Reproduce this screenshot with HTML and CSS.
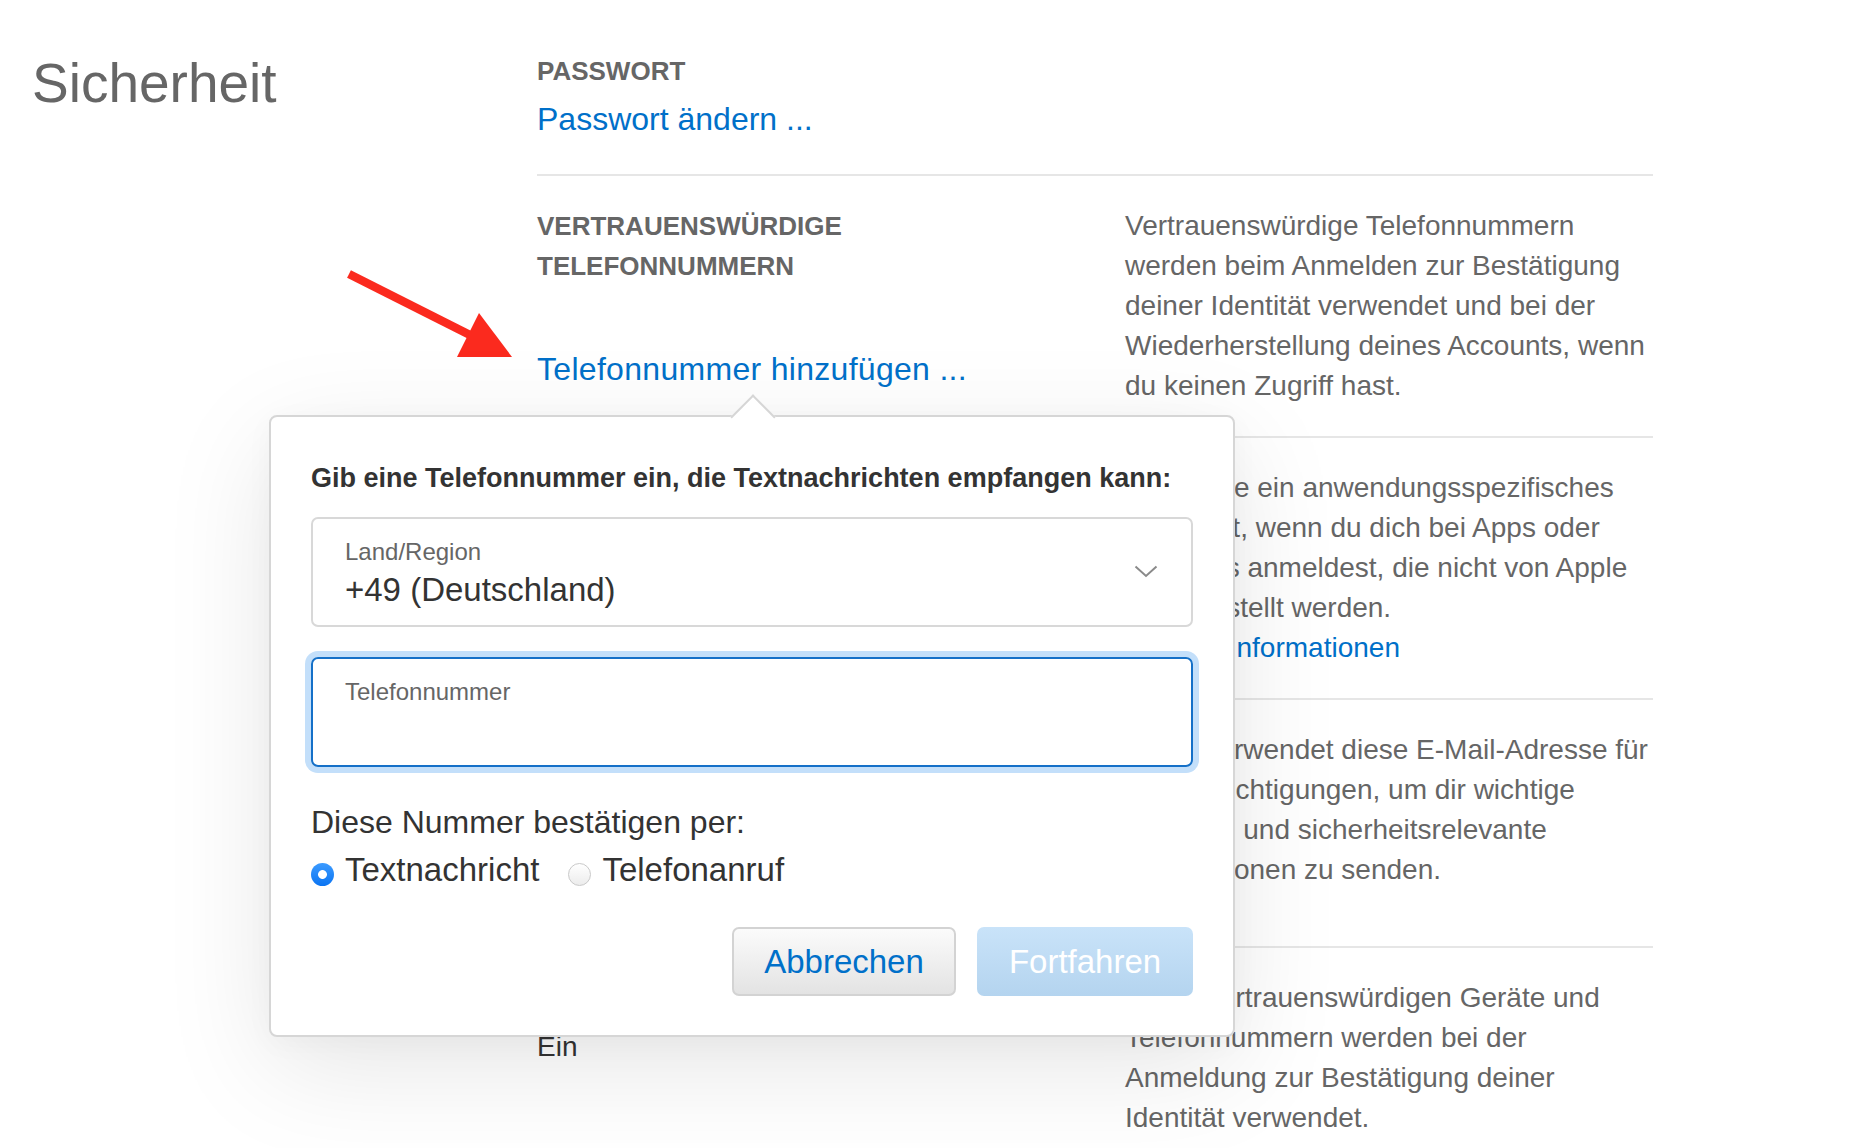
FILE: index.html
```html
<!DOCTYPE html>
<html lang="de">
<head>
<meta charset="utf-8">
<title>Sicherheit</title>
<link rel="stylesheet" href="styles.css">
</head>
<body>
<div class="page">
  <h1 class="title">Sicherheit</h1>
  <div class="sections">
    <section class="section first">
      <div class="col-left">
        <h2 class="label">PASSWORT</h2>
        <a class="link link-tight" href="#">Passwort ändern ...</a>
      </div>
    </section>

    <section class="section">
      <div class="col-left">
        <h2 class="label">VERTRAUENSWÜRDIGE<br>TELEFONNUMMERN</h2>
        <a class="link link-add" href="#">Telefonnummer hinzufügen ...</a>
      </div>
      <p class="desc">Vertrauenswürdige Telefonnummern<br>werden beim Anmelden zur Bestätigung<br>deiner Identität verwendet und bei der<br>Wiederherstellung deines Accounts, wenn<br>du keinen Zugriff hast.</p>
    </section>

    <section class="section">
      <div class="col-left"></div>
      <p class="desc">Generiere ein anwendungsspezifisches<br>Passwort, wenn du dich bei Apps oder<br>Websites anmeldest, die nicht von Apple<br>bereitgestellt werden.<br><a class="desc-link" href="#">Weitere Informationen</a></p>
    </section>

    <section class="section tall">
      <div class="col-left"></div>
      <p class="desc">Apple verwendet diese E-Mail-Adresse für<br>Benachrichtigungen, um dir wichtige<br>Account- und sicherheitsrelevante<br>Informationen zu senden.</p>
    </section>

    <section class="section">
      <div class="col-left">
        <h2 class="label">ZWEI-FAKTOR-AUTHENTIFIZIERUNG</h2>
        <div class="value">Ein</div>
      </div>
      <p class="desc">Deine vertrauenswürdigen Geräte und<br>Telefonnummern werden bei der<br>Anmeldung zur Bestätigung deiner<br>Identität verwendet.</p>
    </section>
  </div>
</div>

<svg class="annotation-arrow" width="180" height="100" viewBox="0 0 180 100">
  <line x1="9" y1="12" x2="132" y2="74" stroke="#fb2a1e" stroke-width="8.5"/>
  <polygon points="139,51 117,95 172,95" fill="#fb2a1e"/>
</svg>

<div class="popover">
  <p class="prompt">Gib eine Telefonnummer ein, die Textnachrichten empfangen kann:</p>
  <div class="field">
    <div class="field-body">
      <div class="field-label">Land/Region</div>
      <div class="field-value">+49 (Deutschland)</div>
    </div>
    <svg class="chevron" width="24" height="13" viewBox="0 0 24 13">
      <polyline points="1.5,1.5 12,11 22.5,1.5" fill="none" stroke="#8a8a8a" stroke-width="2"/>
    </svg>
  </div>
  <div class="field field-focus">
    <div class="field-body">
      <div class="field-label">Telefonnummer</div>
    </div>
  </div>
  <p class="confirm">Diese Nummer bestätigen per:</p>
  <div class="radios">
    <div class="radio-option"><span class="radio radio-on"></span><span>Textnachricht</span></div>
    <div class="radio-option"><span class="radio radio-off"></span><span>Telefonanruf</span></div>
  </div>
  <div class="actions">
    <button class="btn btn-cancel" type="button">Abbrechen</button>
    <button class="btn btn-continue" type="button">Fortfahren</button>
  </div>
</div>
</body>
</html>
```

FILE: styles.css
```css
* {
  box-sizing: border-box;
}

body {
  margin: 0;
  background: #fff;
  font-family: "Liberation Sans", Arial, sans-serif;
  overflow: hidden;
}

.page {
  display: grid;
  grid-template-columns: 505px 1116px;
  padding: 51px 0 0 32px;
}

.title {
  margin: 0;
  font-size: 55px;
  font-weight: normal;
  line-height: 64px;
  color: #666;
}

.section {
  display: grid;
  grid-template-columns: 528px 528px;
  column-gap: 60px;
  padding: 30px 0;
  border-top: 2px solid #e6e6e6;
}

.section.first {
  border-top: 0;
  padding: 0 0 33px;
}

.section.tall {
  padding-bottom: 56px;
}

.label {
  margin: 0;
  font-size: 26px;
  font-weight: bold;
  line-height: 40px;
  color: #666;
  white-space: nowrap;
}

.link {
  display: block;
  font-size: 32px;
  line-height: 44px;
  color: #0070c9;
  text-decoration: none;
  white-space: nowrap;
}

.link-tight {
  margin-top: 6px;
}

.link-add {
  margin-top: 61px;
  letter-spacing: 0.3px;
}

.desc {
  margin: 0;
  font-size: 28px;
  line-height: 40px;
  color: #666;
  white-space: nowrap;
}

.desc-link {
  color: #0070c9;
  text-decoration: none;
}

.value {
  margin-top: 9px;
  font-size: 28px;
  line-height: 40px;
  color: #333;
}

.annotation-arrow {
  position: absolute;
  left: 340px;
  top: 262px;
}

.popover {
  position: absolute;
  left: 269px;
  top: 415px;
  width: 966px;
  padding: 45px 40px 39px;
  background: #fff;
  border: 2px solid #d6d6d6;
  border-radius: 8px;
  box-shadow: 0 30px 110px rgba(0, 0, 0, 0.10), 0 6px 30px rgba(0, 0, 0, 0.03);
}

.popover::before {
  content: "";
  position: absolute;
  left: 466px;
  top: -16px;
  width: 30px;
  height: 30px;
  background: #fff;
  border-left: 2px solid #d6d6d6;
  border-top: 2px solid #d6d6d6;
  transform: rotate(45deg);
}

.prompt {
  position: relative;
  margin: 0;
  font-size: 27px;
  font-weight: bold;
  line-height: 32px;
  color: #333;
  white-space: nowrap;
}

.field {
  margin-top: 23px;
  height: 110px;
  border: 2px solid #d8d8d8;
  border-radius: 7px;
  padding: 19px 33px 0 32px;
  display: flex;
  justify-content: space-between;
  align-items: flex-start;
}

.field-focus {
  margin-top: 30px;
  border-color: #1470c8;
  box-shadow: 0 0 0 6px #c3dffa;
}

.field-label {
  font-size: 24px;
  line-height: 28px;
  color: #666;
}

.field-value {
  margin-top: 5px;
  font-size: 33px;
  line-height: 38px;
  color: #333;
}

.chevron {
  margin-top: 27px;
}

.confirm {
  margin: 36px 0 0;
  font-size: 32px;
  line-height: 38px;
  color: #333;
}

.radios {
  margin-top: 9px;
  display: flex;
  align-items: flex-start;
  font-size: 33px;
  line-height: 40px;
  color: #333;
}

.radio-option {
  display: flex;
  align-items: flex-start;
}

.radio-option + .radio-option {
  margin-left: 29px;
}

.radio {
  width: 23px;
  height: 23px;
  border-radius: 50%;
  margin-top: 13px;
  margin-right: 11px;
  flex: none;
}

.radio-on {
  background: radial-gradient(circle, #fff 0 4px, rgba(255, 255, 255, 0) 4.8px), linear-gradient(#3c9bff, #0b74f2);
}

.radio-off {
  border: 1px solid #c9c9c9;
  background: linear-gradient(#ffffff, #ececec);
}

.actions {
  margin-top: 37px;
  display: flex;
  justify-content: flex-end;
  gap: 21px;
}

.btn {
  height: 69px;
  padding: 0;
  border-radius: 7px;
  font-family: inherit;
  font-size: 33px;
  line-height: 38px;
  display: flex;
  align-items: center;
  justify-content: center;
}

.btn-cancel {
  width: 224px;
  border: 2px solid #d3d3d3;
  background: linear-gradient(#fbfbfb, #e3e3e3);
  color: #0070c9;
}

.btn-continue {
  width: 216px;
  border: 0;
  background: linear-gradient(#c9e3f9, #b4d4ef);
  color: #fff;
}
```
